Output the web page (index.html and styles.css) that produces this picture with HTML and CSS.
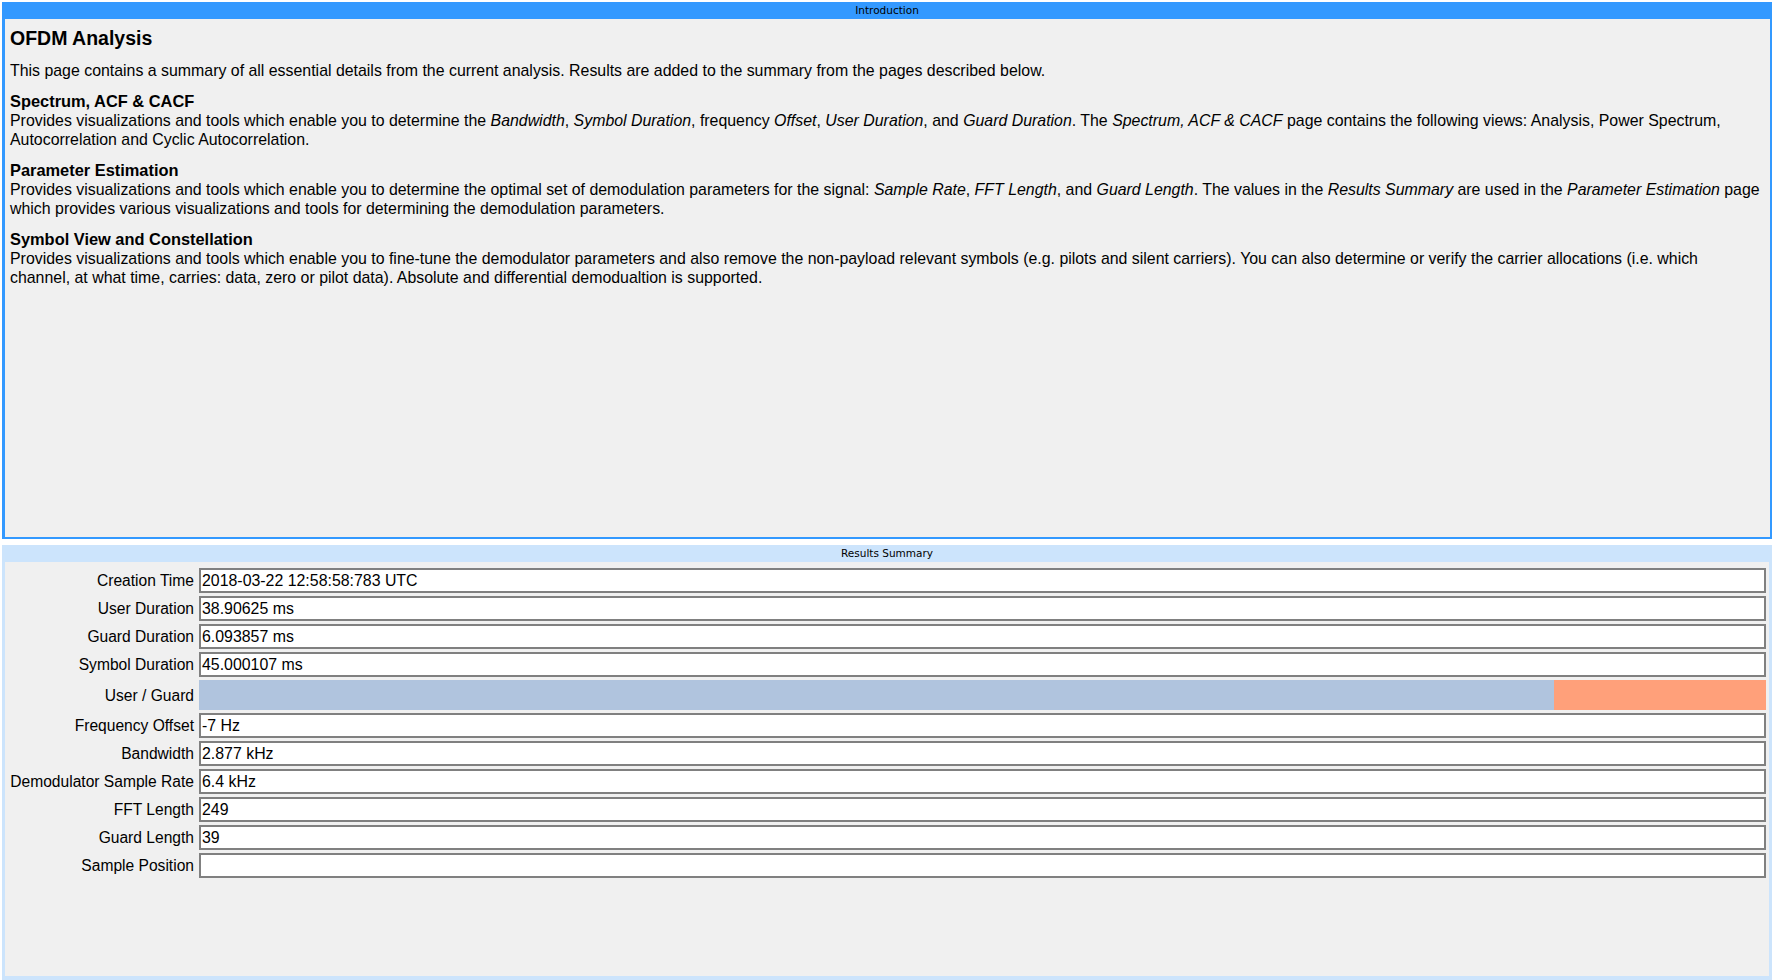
FILE: index.html
```html
<!DOCTYPE html>
<html lang="en">
<head>
  <meta charset="UTF-8">
  <title>OFDM Analysis</title>
  <link rel="stylesheet" href="styles.css">
</head>
<body>
  <div class="window">
    <!-- Introduction -->
    <section class="panel intro">
      <div class="panel-title">Introduction</div>
      <div class="panel-body">
        <h1>OFDM Analysis</h1>
        <p>This page contains a summary of all essential details from the current analysis. Results are added to the summary from the pages described below.</p>

        <div class="topic">
          <h2>Spectrum, ACF &amp; CACF</h2>
          <p>Provides visualizations and tools which enable you to determine the <i>Bandwidth</i>, <i>Symbol Duration</i>, frequency <i>Offset</i>, <i>User Duration</i>, and <i>Guard Duration</i>. The <i>Spectrum, ACF &amp; CACF</i> page contains the following views: Analysis, Power Spectrum, Autocorrelation and Cyclic Autocorrelation.</p>
        </div>

        <div class="topic">
          <h2>Parameter Estimation</h2>
          <p>Provides visualizations and tools which enable you to determine the optimal set of demodulation parameters for the signal: <i>Sample Rate</i>, <i>FFT Length</i>, and <i>Guard Length</i>. The values in the <i>Results Summary</i> are used in the <i>Parameter Estimation</i> page which provides various visualizations and tools for determining the demodulation parameters.</p>
        </div>

        <div class="topic">
          <h2>Symbol View and Constellation</h2>
          <p>Provides visualizations and tools which enable you to fine-tune the demodulator parameters and also remove the non-payload relevant symbols (e.g. pilots and silent carriers). You can also determine or verify the carrier allocations (i.e. which<br>channel, at what time, carries: data, zero or pilot data). Absolute and differential demodualtion is supported.</p>
        </div>
      </div>
    </section>

    <!-- Results Summary -->
    <section class="panel results">
      <div class="panel-title">Results Summary</div>
      <div class="panel-body">
        <div class="form">
          <label>Creation Time</label><div class="field">2018-03-22 12:58:58:783 UTC</div>
          <label>User Duration</label><div class="field">38.90625 ms</div>
          <label>Guard Duration</label><div class="field">6.093857 ms</div>
          <label>Symbol Duration</label><div class="field">45.000107 ms</div>
          <label>User / Guard</label>
          <div class="ratio">
            <div class="ratio-user" style="width: 86.46%"></div>
            <div class="ratio-guard"></div>
          </div>
          <label>Frequency Offset</label><div class="field">-7 Hz</div>
          <label>Bandwidth</label><div class="field">2.877 kHz</div>
          <label>Demodulator Sample Rate</label><div class="field">6.4 kHz</div>
          <label>FFT Length</label><div class="field">249</div>
          <label>Guard Length</label><div class="field">39</div>
          <label>Sample Position</label><div class="field"></div>
        </div>
      </div>
    </section>
  </div>
</body>
</html>
```

FILE: styles.css
```css
/* layout */
html, body { height: 100%; }
body {
  margin: 0;
  background: #fff;
  color: #000;
  font-family: "Liberation Sans", Arial, sans-serif;
  font-size: 15.9px;
}
.window {
  display: flex;
  flex-direction: column;
  gap: 6px;
  height: 100vh;
  padding: 2px 2px 0 2px;
  box-sizing: border-box;
}

/* panels */
.panel {
  display: flex;
  flex-direction: column;
  background: #f0f0f0;
  box-sizing: border-box;
}
.panel-title {
  height: 17px;
  line-height: 17px;
  text-align: center;
  font-family: "DejaVu Sans", sans-serif;
  font-size: 10.5px;
  color: #000;
}
.panel-body { flex: 1; box-sizing: border-box; }

.intro {
  height: 537px;
  border: 2px solid #3399ff;
  border-left-width: 3px;
  border-top: 0;
}
.intro .panel-title { background: #3399ff; margin: 0 -2px 0 -3px; }
.intro .panel-body { padding: 7px 3px 0 5px; line-height: 19px; }

h1 {
  margin: 0 0 11px 0;
  font-size: 19.5px;
  line-height: 24px;
  font-weight: bold;
}
p { margin: 0; }
.topic { margin-top: 12px; }
h2 { margin: 0; font-size: 16.4px; font-weight: bold; line-height: 19px; }

.results {
  flex: 1;
  border: 3px solid #cce4fc;
  border-bottom-width: 4px;
  border-top: 0;
}
.results .panel-title { background: #cce4fc; margin: 0 -3px; }
.results .panel-body { padding: 6px 3px 0 5px; }

/* form */
.form {
  display: grid;
  grid-template-columns: 184px 1fr;
  column-gap: 5px;
  row-gap: 3px;
  font-size: 15.6px;
}
.form label {
  text-align: right;
  white-space: nowrap;
  align-self: center;
  padding-top: 1px;
}
.field {
  height: 25px;
  line-height: 22px;
  padding: 0 1px;
  background: #fff;
  border: 2px solid #808080;
  box-sizing: border-box;
  font-size: 15.9px;
}
.ratio { display: flex; height: 30px; }
.ratio-user { background: #b0c4de; }
.ratio-guard { flex: 1; background: #ffa07a; }
```
